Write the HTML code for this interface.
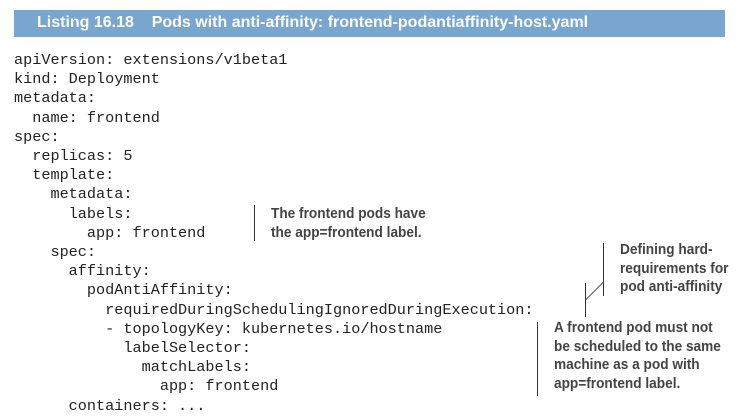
<!DOCTYPE html>
<html><head><meta charset="utf-8"><style>
body{margin:0;width:755px;height:420px;background:#fff;position:relative;overflow:hidden}
.bar{position:absolute;left:14px;top:10px;width:711px;height:27px;background:#78a6cf}
.title{position:absolute;left:37px;top:14px;font:bold 16px "Liberation Sans",sans-serif;color:#fff;white-space:pre;transform-origin:0 0;transform:scaleX(1.0)}
pre{position:absolute;left:14px;top:51px;margin:0;font:15.2px/19.2px "Liberation Mono",monospace;color:#222}
.a{position:absolute;font:bold 15px/18.5px "Liberation Sans",sans-serif;color:#444;white-space:pre;transform-origin:0 0;transform:scaleX(0.91)}
.l{position:absolute;background:#333;width:1px}
</style></head><body>
<div class="bar"></div>
<div class="title">Listing 16.18    Pods with anti-affinity: frontend-podantiaffinity-host.yaml</div>
<pre>apiVersion: extensions/v1beta1
kind: Deployment
metadata:
  name: frontend
spec:
  replicas: 5
  template:
    metadata:
      labels:
        app: frontend
    spec:
      affinity:
        podAntiAffinity:
          requiredDuringSchedulingIgnoredDuringExecution:
          - topologyKey: kubernetes.io/hostname
            labelSelector:
              matchLabels:
                app: frontend
      containers: ...</pre>
<div class="l" style="left:254px;top:205px;height:36px"></div>
<div class="a" style="left:271px;top:205px">The frontend pods have
the app=frontend label.</div>
<div class="l" style="left:603px;top:243px;height:53px"></div>
<div class="l" style="left:585px;top:283px;height:34px"></div>
<svg style="position:absolute;left:0;top:0" width="755" height="420"><line x1="585.5" y1="300" x2="603.5" y2="282" stroke="#555" stroke-width="1"/></svg>
<div class="a" style="left:620px;top:241px">Defining hard-
requirements for
pod anti-affinity</div>
<div class="l" style="left:537px;top:322px;height:74px"></div>
<div class="a" style="left:554px;top:319px">A frontend pod must not
be scheduled to the same
machine as a pod with
app=frontend label.</div>
</body></html>
